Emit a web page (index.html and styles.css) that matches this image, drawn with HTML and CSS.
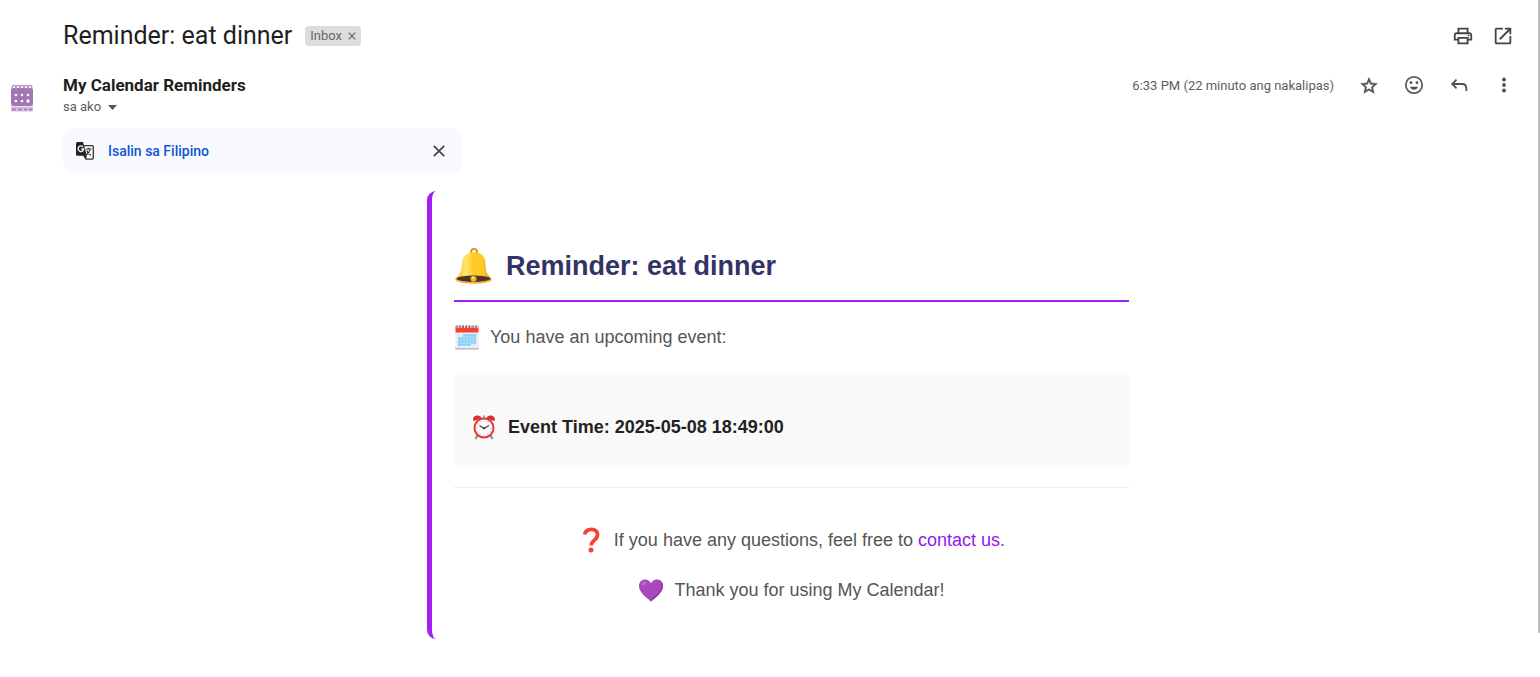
FILE: index.html
```html
<!DOCTYPE html>
<html lang="fil">
<head>
<meta charset="utf-8">
<meta name="viewport" content="width=device-width, initial-scale=1">
<title>Reminder: eat dinner</title>
<link rel="stylesheet" href="styles.css">
</head>
<body>
<main class="message">
  <header class="subject-row">
    <h1 class="subject">Reminder: eat dinner</h1>
    <span class="label">Inbox <button class="label-remove" aria-label="Remove label">
      <svg width="8" height="8" viewBox="0 0 8 8"><path d="M.7.7l6.6 6.6M7.3.7L.7 7.3" stroke="#666" stroke-width="1.2"/></svg></button></span>
    <div class="page-tools">
      <button class="icon-button" aria-label="Print">
        <svg width="22" height="22" viewBox="0 0 24 24"><path fill="#444" d="M19 8h-1V3H6v5H5c-1.660 0-3 1.340-3 3v6h4v4h12v-4h4v-6c0-1.660-1.340-3-3-3zM8 5h8v3H8V5zm8 14H8v-4h8v4zm2-4v-2H6v2H4v-4c0-.55.45-1 1-1h14c.55 0 1 .45 1 1v4h-2z"/><circle cx="18" cy="11.500" r="1" fill="#444"/></svg>
      </button>
      <button class="icon-button" aria-label="Open in new window">
        <svg width="22" height="22" viewBox="0 0 24 24"><path fill="#444" d="M19 19H5V5h7V3H5c-1.110 0-2 .9-2 2v14c0 1.100.89 2 2 2h14c1.100 0 2-.9 2-2v-7h-2v7zM14 3v2h3.590l-9.830 9.830 1.410 1.410L19 6.410V10h2V3h-7z"/></svg>
      </button>
    </div>
  </header>

  <section class="sender-row">
    <div class="avatar">
      <svg width="24" height="30" viewBox="0 0 24 30">
        <rect x="1" y="4" width="22" height="18" rx="2" fill="#a077b4"/>
        <path d="M2.500 5q-1-3 1.500-3.500t1.500 3M6.500 5q-1-3 1.500-3.500t1.500 3M10.500 5q-1-3 1.500-3.500t1.500 3M14.500 5q-1-3 1.500-3.500t1.500 3M18.500 5q-1-3 1.500-3.500t1.500 3" fill="none" stroke="#b796c5" stroke-width="1.300"/>
        <g fill="#fff"><circle cx="6" cy="11" r="1.300"/><circle cx="12" cy="11" r="1.300"/><circle cx="18" cy="11" r="1.300"/><circle cx="6" cy="17" r="1.300"/><circle cx="12" cy="17" r="1.300"/><circle cx="18" cy="17" r="1.700"/></g>
        <path d="M1 22.500h22v5H1z" fill="#d2bddb"/><path d="M2 25.500h4m2 0h4m2 0h3m2 0h3" stroke="#a985ba" stroke-width="2"/>
      </svg>
    </div>
    <div class="sender">
      <div class="sender-name">My Calendar Reminders</div>
      <button class="recipient">sa ako <svg width="9" height="5" viewBox="0 0 9 5"><path d="M0 0h9L4.500 5z" fill="#555"/></svg></button>
    </div>
    <div class="message-tools">
      <time class="sent">6:33 PM (22 minuto ang nakalipas)</time>
      <button class="icon-button" aria-label="Star">
        <svg width="20" height="20" viewBox="0 0 24 24"><path fill="#505050" stroke="#505050" stroke-width=".6" d="M22 10.240l-7.190-.62L12 3 9.190 9.630 2 10.240l5.460 4.730L5.820 22 12 18.270 18.180 22l-1.630-7.030L22 10.240zM12 16.400l-3.760 2.270 1-4.280-3.320-2.880 4.380-.38L12 7.100l1.710 4.040 4.380.38-3.320 2.880 1 4.280L12 16.400z"/></svg>
      </button>
      <button class="icon-button" aria-label="Add reaction">
        <svg width="20" height="20" viewBox="0 0 20 20"><circle cx="10" cy="10" r="8.200" fill="none" stroke="#5a5a5a" stroke-width="1.800"/><circle cx="7" cy="7.700" r="1.400" fill="#505050"/><circle cx="13" cy="7.700" r="1.400" fill="#505050"/><path d="M6 11.800h8c-.7 2-2.200 2.900-4 2.900s-3.300-.9-4-2.900z" fill="#505050"/></svg>
      </button>
      <button class="icon-button" aria-label="Reply">
        <svg width="20" height="20" viewBox="0 0 20 20"><path d="M7.500 4.700L3.200 9l4.300 4.300M3.500 9H13c2.700 0 4.300 1.800 4.300 4.300V16" fill="none" stroke="#505050" stroke-width="1.800"/></svg>
      </button>
      <button class="icon-button" aria-label="More">
        <svg width="20" height="20" viewBox="0 0 20 20" fill="#505050"><circle cx="10" cy="4.500" r="1.900"/><circle cx="10" cy="10" r="1.900"/><circle cx="10" cy="15.500" r="1.900"/></svg>
      </button>
    </div>
  </section>

  <section class="translate">
    <svg width="18" height="18" viewBox="0 0 18 18">
      <path d="M7 3.700h9.200q1.100 0 1.100 1.100v11.300q0 1.100-1.100 1.100H10L7.500 13z" fill="#fff" stroke="#333" stroke-width="1.300"/>
      <path d="M9.500 7h6M12.500 5.800V7M14.300 7c-.5 2.500-2 4.500-4 5.700M10.800 8.500c.7 2 2 3.500 4.200 4.700" fill="none" stroke="#333" stroke-width="1.200"/>
      <path d="M1.500 0H7l3.900 13.700H1.500Q0 13.700 0 12.200V1.500Q0 0 1.500 0z" fill="#222"/><path d="M8 13.700h3l-1.300 3.600z" fill="#222"/>
      <path d="M7 4.900A2.800 2.800 0 1 0 7.700 7H5.200" fill="none" stroke="#fff" stroke-width="1.300"/>
    </svg>
    <a class="translate-link" href="#">Isalin sa Filipino</a>
    <button class="icon-button dismiss" aria-label="Dismiss">
      <svg width="12" height="12" viewBox="0 0 12 12"><path d="M.8.8l10.400 10.400M11.200.8L.8 11.200" stroke="#444" stroke-width="1.700"/></svg>
    </button>
  </section>

  <article class="card">
    <h2 class="card-title">
      <svg width="38" height="36" viewBox="0 0 38 38" preserveAspectRatio="none">
        <defs><linearGradient id="gold"><stop offset="0" stop-color="#f6b51d"/><stop offset=".3" stop-color="#ffe86b"/><stop offset=".5" stop-color="#ffc928"/><stop offset=".75" stop-color="#ffc928"/><stop offset="1" stop-color="#dfa017"/></linearGradient></defs>
        <circle cx="20" cy="4" r="3" fill="none" stroke="#d29a20" stroke-width="2"/>
        <path d="M20 4.500C12 4.500 8.500 9 8 16.500c-.5 7-1.500 11-5 14-2.500 2.200-2 3.500 0 4.500 4.500 2.500 28.500 2.500 33 0 2-1 2-2.700 0-4.500-3.700-3.300-4.200-7-4.500-14C31 9 28 4.500 20 4.500z" fill="url(#gold)"/>
        <ellipse cx="19.500" cy="32.500" rx="17" ry="3.400" fill="#4e342e"/><path d="M3 34c6 4 27 4 33 0" fill="none" stroke="#f5b920" stroke-width="1.500"/>
        <circle cx="19.500" cy="32.500" r="3" fill="#f2b92d"/><circle cx="18.800" cy="31.500" r="1" fill="#fff1a0"/>
      </svg>
      Reminder: eat dinner
    </h2>
    <p class="line">
      <svg width="26" height="26" viewBox="0 0 26 26">
        <rect x="1" y="22" width="24" height="3.500" rx="1" fill="#b0bec5"/><path d="M1.500 7h23l.5 17H1z" fill="#eceff1"/>
        <path d="M1.500 2h23v6.500h-23z" fill="#f44336"/><path d="M3.500 4V1m3.200 3V1m3.200 3V1m3.200 3V1m3.200 3V1m3.200 3V1m3.200 3V1" stroke="#fff" stroke-width="2"/><path d="M3 4V1m3.200 3V1m3.200 3V1m3.200 3V1m3.200 3V1m3.200 3V1m3.200 3V1" stroke="#517078" stroke-width="1"/>
        <path d="M9 10h13v10h-5v2H4v-9h5z" fill="#82cdf7"/><path d="M4 13h18M4 16h18M4 19h18M7 13v9M10 10v12M13 10v12M16 10v12M19 10v10" stroke="#bde6fc" stroke-width=".7"/><path d="M4 10h4v2H4zM18 21h4v2h-4z" fill="#d7eefa"/>
      </svg>
      You have an upcoming event:
    </p>
    <div class="event">
      <p class="line event-time">
        <svg width="24" height="26" viewBox="0 0 24 26">
          <path d="M5.500 21L3.500 25M18.500 21l2 4" stroke="#78909c" stroke-width="2"/><path d="M12 1.500v3" stroke="#90a4ae" stroke-width="2"/>
          <path d="M1.500 7C0 3.500 3 1 6 1.500c2 .3 3.500 1.500 4 3zM22.500 7C24 3.500 21 1 18 1.500c-2 .3-3.500 1.500-4 3z" fill="#d83330"/>
          <circle cx="12" cy="14" r="9.500" fill="#fafafa" stroke="#e53935" stroke-width="2"/>
          <circle cx="12" cy="14" r="7.200" fill="none" stroke="#8a8a8a" stroke-width="1" stroke-dasharray=".7 3.070"/>
          <path d="M7.500 11.500L12 14.500l5-3" fill="none" stroke="#444" stroke-width="1.300"/><circle cx="12" cy="14.300" r="1.100" fill="#333"/>
        </svg>
        <strong>Event Time: 2025-05-08 18:49:00</strong>
      </p>
    </div>
    <footer class="card-footer">
      <p class="line">
        <svg width="26" height="26" viewBox="0 0 26 26"><path d="M6.500 7.500C7.500 4 10 2.400 13.500 2.400c4 0 6 2.300 6 5.400 0 5.300-6.200 5.400-6.200 10.700" fill="none" stroke="#f44336" stroke-width="3.800"/><circle cx="13" cy="23" r="2.500" fill="#f44336"/></svg>
        <span>If you have any questions, feel free to <a class="contact" href="#">contact us</a>.</span>
      </p>
      <p class="line">
        <svg width="26" height="26" viewBox="0 0 26 26"><path d="M13 24.500C9 21 1 15.500 1 9c0-4 2.800-6.500 6.200-6.500 2.500 0 4.600 1.300 5.800 3.800 1.200-2.500 3.300-3.800 5.800-3.800C22.200 2.500 25 5 25 9c0 6.500-8 12-12 15.500z" fill="#ab47bc"/><path d="M21 3c4 3.500 3 10-2 14-3 2.500-5 4-7 6.500l1 1C17 21 25 15.500 25 9c0-3-1.600-5.200-4-6z" fill="#8e3aaa"/><ellipse cx="6" cy="6.500" rx="2.600" ry="1.500" fill="#c56cd4" transform="rotate(-35 6 6.500)"/></svg>
        Thank you for using My Calendar!
      </p>
    </footer>
  </article>
</main>
</body>
</html>
```
FILE: styles.css
```css
* {
  box-sizing: border-box;
}

body {
  margin: 0;
  background: #fff;
  color: #1f1f1f;
  font-family: Roboto, "Liberation Sans", sans-serif;
}

h1, h2, p {
  margin: 0;
}

button {
  border: 0;
  padding: 0;
  background: none;
  color: inherit;
  font: inherit;
  cursor: pointer;
}

a {
  text-decoration: none;
}

svg {
  display: block;
  flex: none;
}

.message {
  padding: 18px 25px 0 63px;
  background: linear-gradient(#bdbdbd, #bdbdbd) right top / 2px calc(100% - 6px) no-repeat;
}

.subject-row {
  display: flex;
  align-items: center;
  height: 35px;
}

.subject {
  font-size: 25px;
  font-weight: 400;
  line-height: 35px;
}

.label {
  display: flex;
  align-items: center;
  gap: 6px;
  height: 20px;
  margin-left: 13px;
  padding: 0 5px;
  border-radius: 4px;
  background: #ddd;
  color: #666;
  font-size: 13px;
}

.page-tools {
  display: flex;
  gap: 18px;
  margin-left: auto;
  padding-right: 1px;
}

.icon-button {
  display: grid;
  place-items: center;
}

.sender-row {
  display: flex;
  margin: 20px 0 11px -53px;
}

.avatar {
  width: 53px;
  padding-top: 11px;
}

.sender-name {
  font-size: 17px;
  font-weight: 700;
  line-height: 24px;
}

.recipient {
  display: flex;
  align-items: center;
  gap: 7px;
  color: #5e5e5e;
  font-size: 13px;
  line-height: 20px;
}

.message-tools {
  display: flex;
  align-items: center;
  gap: 25px;
  height: 24px;
  margin-left: auto;
  padding-right: 1px;
}

.sent {
  color: #5e5e5e;
  font-size: 13px;
}

.translate {
  display: flex;
  align-items: center;
  gap: 14px;
  max-width: 399px;
  height: 45px;
  margin-bottom: 18px;
  padding: 0 17px 0 13px;
  border-radius: 9px;
  background: #f8faff;
}

.translate-link {
  color: #0b57d0;
  font-size: 14px;
  font-weight: 500;
}

.dismiss {
  margin-left: auto;
}

.card {
  max-width: 724px;
  margin: 0 auto;
  padding: 55px 22px 36px;
  border-left: 5px solid #a020f0;
  border-radius: 9px;
  color: #555;
  font-family: "Liberation Sans", Arial, sans-serif;
  font-size: 18px;
  line-height: 26px;
}

.card-title {
  display: flex;
  align-items: center;
  gap: 14px;
  margin-bottom: 22px;
  padding-bottom: 14px;
  border-bottom: 2px solid #a020f0;
  color: #333366;
  font-size: 27px;
  line-height: 40px;
}

.line {
  display: flex;
  align-items: center;
  gap: 10px;
}

.event {
  margin: 25px 0 22px;
  padding: 39px 18px 25px;
  border-radius: 4px;
  background: #f9f9f9;
}

.event-time {
  gap: 12px;
  color: #222;
}

.card-footer {
  display: grid;
  justify-items: center;
  gap: 24px;
  padding-top: 39px;
  border-top: 1px solid #eee;
}

.contact {
  color: #9418ea;
}
```
